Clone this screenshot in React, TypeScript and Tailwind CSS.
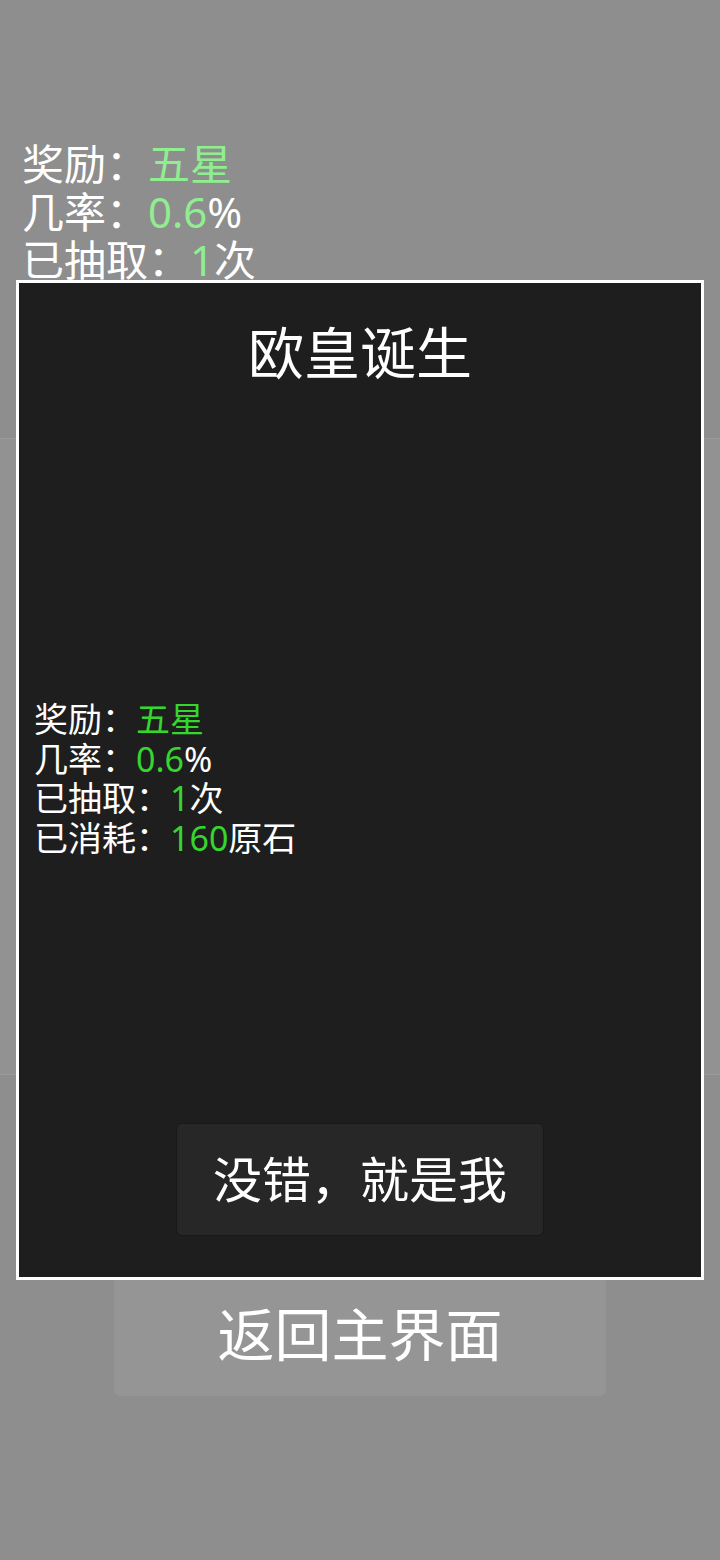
import React from 'react'

const FONT = 'font-["Noto_Sans","Noto_Sans_CJK_SC",sans-serif]'

const stats = [
  { label: '奖励：', value: '五星', unit: '' },
  { label: '几率：', value: '0.6', unit: '%' },
  { label: '已抽取：', value: '1', unit: '次' },
  { label: '已消耗：', value: '160', unit: '原石' },
]

export default function App() {
  return (
    <div className={`relative min-h-[1560px] w-full bg-[#8e8e8e] text-white ${FONT}`}>
      {/* Page behind the dialog */}
      <div className="pt-[140px] pl-[22px] text-[42px] leading-[48px]">
        {stats.slice(0, 3).map((s) => (
          <div key={s.label}>
            {s.label}
            <span className="text-[#90ee90]">{s.value}</span>
            {s.unit}
          </div>
        ))}
      </div>

      <div className="mt-[154px] h-[637px] border-y border-[#9a9a9a] bg-[#929292]"></div>

      <div className="mx-auto mt-[199px] flex h-[122px] w-[492px] items-center justify-center rounded-md bg-[#959595] text-[57px]">
        返回主界面
      </div>

      {/* Dialog */}
      <div className="absolute left-[16px] top-[280px] flex h-[1000px] w-[688px] flex-col border-[3px] border-white bg-[#1e1e1e]">
        <h1 className="pt-[37px] text-center text-[56px] leading-[64px] font-normal">
          欧皇诞生
        </h1>

        <div className="mt-[316px] pl-[15px] text-[34px] leading-[39.5px]">
          {stats.map((s) => (
            <div key={s.label}>
              {s.label}
              <span className="text-[#36d62e]">{s.value}</span>
              {s.unit}
            </div>
          ))}
        </div>

        <button className="mx-auto mt-[265px] flex h-[113px] w-[368px] items-center justify-center rounded-md border border-[#191919] bg-[#272727] text-[49px] text-white">
          没错，就是我
        </button>
      </div>
    </div>
  )
}
